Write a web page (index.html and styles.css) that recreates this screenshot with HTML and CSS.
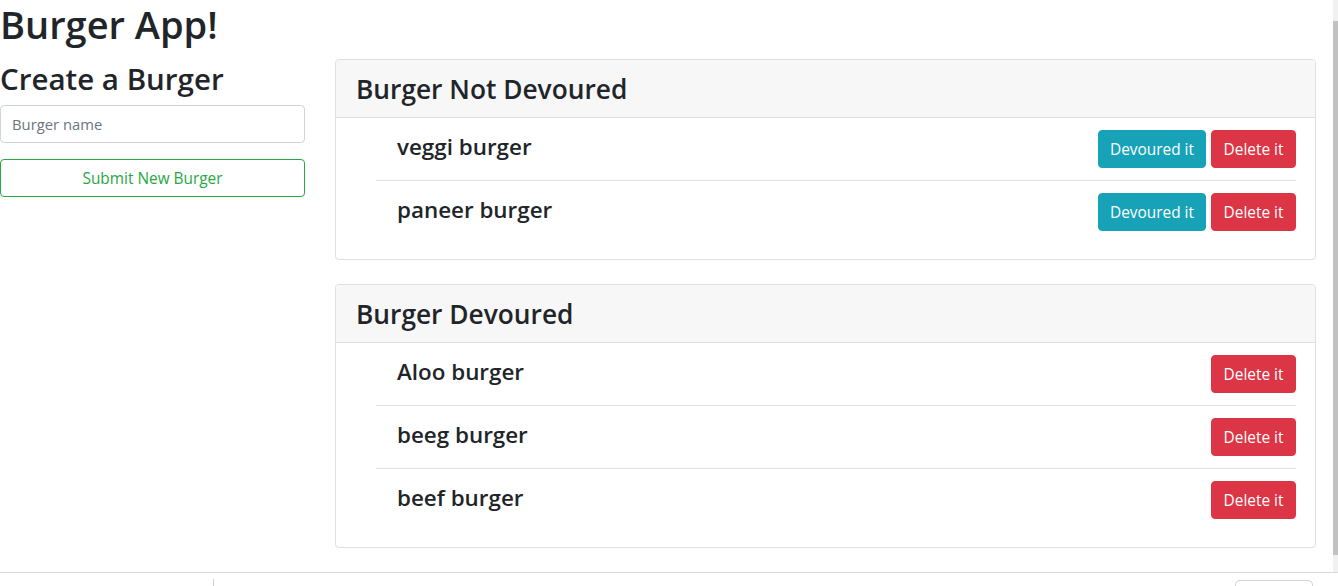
FILE: index.html
```html
<!DOCTYPE html>
<html lang="en">
<head>
<meta charset="utf-8">
<title>Burger App</title>
<link rel="stylesheet" href="styles.css">
</head>
<body>
<div class="viewport">
  <div class="page">
    <h1 class="title">Burger App!</h1>
    <div class="row">
      <div class="col-left">
        <h2 class="subtitle">Create a Burger</h2>
        <form class="create-form">
          <input class="field" type="text" placeholder="Burger name">
          <button class="btn btn-outline-success" type="button">Submit New Burger</button>
        </form>
      </div>
      <div class="col-right">
        <div class="card">
          <div class="card-header"><h3 class="card-title">Burger Not Devoured</h3></div>
          <ul class="burger-list">
            <li class="burger">
              <h4 class="burger-name">veggi burger</h4>
              <div class="actions">
                <button class="btn btn-info" type="button">Devoured it</button>
                <button class="btn btn-danger" type="button">Delete it</button>
              </div>
            </li>
            <li class="burger">
              <h4 class="burger-name">paneer burger</h4>
              <div class="actions">
                <button class="btn btn-info" type="button">Devoured it</button>
                <button class="btn btn-danger" type="button">Delete it</button>
              </div>
            </li>
          </ul>
        </div>
        <div class="card">
          <div class="card-header"><h3 class="card-title">Burger Devoured</h3></div>
          <ul class="burger-list">
            <li class="burger">
              <h4 class="burger-name">Aloo burger</h4>
              <div class="actions">
                <button class="btn btn-danger" type="button">Delete it</button>
              </div>
            </li>
            <li class="burger">
              <h4 class="burger-name">beeg burger</h4>
              <div class="actions">
                <button class="btn btn-danger" type="button">Delete it</button>
              </div>
            </li>
            <li class="burger">
              <h4 class="burger-name">beef burger</h4>
              <div class="actions">
                <button class="btn btn-danger" type="button">Delete it</button>
              </div>
            </li>
          </ul>
        </div>
      </div>
    </div>
  </div>
  <div class="scrollbar"><div class="thumb"></div></div>
</div>
<div class="devbar">
  <div class="tick"></div>
  <div class="devbox"></div>
</div>
</body>
</html>
```

FILE: styles.css
```css
* { box-sizing: border-box; }

html, body {
  margin: 0;
  padding: 0;
  background: #fff;
  overflow: hidden;
}

body {
  font-family: "Open Sans", "Noto Sans", sans-serif;
  color: #212529;
  font-size: 16px;
  line-height: 1.5;
}

.viewport {
  display: flex;
  height: 572px;
}

.page {
  flex: 1;
  padding-right: 17px;
}

.title {
  margin: 0 0 8px;
  font-size: 38px;
  font-weight: 600;
  line-height: 48px;
}

.row {
  display: flex;
  gap: 30px;
}

.col-left {
  width: 305px;
  flex: none;
}

.col-right {
  flex: 1;
  padding-top: 3px;
  display: flex;
  flex-direction: column;
  gap: 24px;
}

.subtitle {
  margin: 0 0 7px;
  padding-top: 4px;
  font-size: 29.5px;
  font-weight: 600;
  line-height: 38px;
}

.create-form {
  display: flex;
  flex-direction: column;
  gap: 16px;
}

.field {
  display: block;
  width: 100%;
  height: 38px;
  padding: 6px 11px;
  font-family: inherit;
  font-size: 14.8px;
  color: #495057;
  border: 1px solid #ced4da;
  border-radius: 4px;
  background: #fff;
}

.field::placeholder { color: #6c757d; }

.btn {
  display: inline-block;
  height: 38px;
  padding: 1px 10px 0;
  font-family: inherit;
  font-size: 15.4px;
  line-height: 35px;
  border: 1px solid transparent;
  border-radius: 4px;
  cursor: pointer;
  white-space: nowrap;
}

.btn-outline-success {
  width: 100%;
  color: #28a745;
  background: #fff;
  border-color: #28a745;
}

.btn-info {
  color: #fff;
  background: #17a2b8;
  border-color: #17a2b8;
  width: 108px;
}

.btn-danger {
  color: #fff;
  background: #dc3545;
  border-color: #dc3545;
  width: 85px;
}

.card {
  border: 1px solid #dfdfdf;
  border-radius: 4px;
  overflow: hidden;
}

.card-header {
  background: #f7f7f7;
  border-bottom: 1px solid #dfdfdf;
  padding: 13px 20px 11px;
}

.card-title {
  margin: 0;
  font-size: 26.3px;
  font-weight: 600;
  line-height: 33px;
}

.burger-list {
  list-style: none;
  margin: 0;
  padding: 0 19px 16px 40px;
}

.burger {
  display: flex;
  align-items: center;
  justify-content: space-between;
  padding: 12px 0 12px 21px;
}

.burger + .burger {
  border-top: 1px solid #dfdfdf;
}

.burger-name {
  margin: 0;
  font-size: 22.4px;
  font-weight: 600;
  line-height: 28px;
  position: relative;
  top: -2px;
}

.actions {
  display: flex;
  gap: 5px;
}

.scrollbar {
  width: 5px;
  background: #f1f1f1;
  padding-top: 21px;
}

.thumb {
  height: 534px;
  background: #c1c1c1;
}

.devbar {
  height: 14px;
  border-top: 1px solid #dadada;
  display: flex;
  align-items: flex-start;
  justify-content: space-between;
  padding: 0 25px 0 213px;
}

.tick {
  width: 1px;
  height: 8px;
  margin-top: 6px;
  background: #cfcfcf;
}

.devbox {
  width: 78px;
  height: 12px;
  margin-top: 7px;
  border: 1px solid #d4d4d4;
  border-bottom: none;
  border-radius: 5px 5px 0 0;
}
```
